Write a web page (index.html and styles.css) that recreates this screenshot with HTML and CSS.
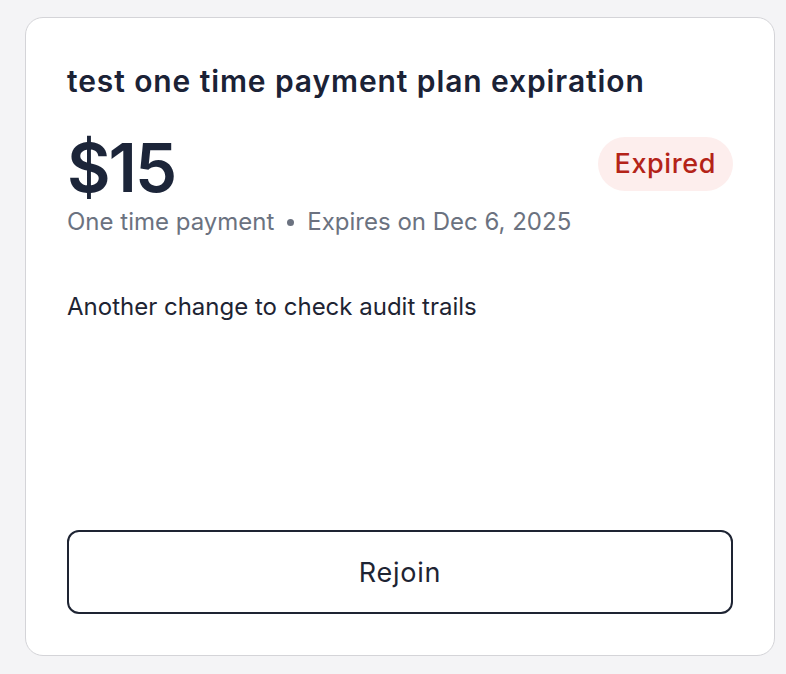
FILE: index.html
```html
<!DOCTYPE html>
<html>
<head>
<meta charset="utf-8">
<link rel="stylesheet" href="styles.css">
</head>
<body>
<div class="page">
  <div class="card">
    <h2 class="title">test one time payment plan expiration</h2>
    <div class="price-row">
      <div class="price">$15</div>
      <span class="badge">Expired</span>
    </div>
    <div class="meta">
      <span>One time payment</span>
      <span class="dot"></span>
      <span>Expires on Dec 6, 2025</span>
    </div>
    <p class="desc">Another change to check audit trails</p>
    <button class="btn">Rejoin</button>
  </div>
</div>
</body>
</html>
```

FILE: styles.css
```css
* { box-sizing: border-box; }
html, body { margin: 0; padding: 0; }
body {
  background: #f4f4f6;
  font-family: Inter, "Noto Sans", sans-serif;
  width: 786px;
  height: 674px;
  overflow: hidden;
}
.page {
  padding: 17px 11px 0 25px;
}
.card {
  width: 750px;
  height: 639px;
  background: #ffffff;
  border: 1.5px solid #d4d4d8;
  border-radius: 18px;
  padding: 45px 41px 41px 41px;
  display: flex;
  flex-direction: column;
}
.title {
  margin: 0;
  font-size: 30px;
  line-height: 36px;
  font-weight: 600;
  color: #1b2236;
  letter-spacing: 0.9px;
}
.price-row {
  display: flex;
  justify-content: space-between;
  align-items: flex-start;
  margin-top: 35px;
}
.price {
  font-size: 67px;
  line-height: 67px;
  font-weight: 600;
  color: #1c2539;
  letter-spacing: -2px;
}
.badge {
  margin-top: 3px;
  background: #fdeeed;
  color: #b42318;
  font-size: 27px;
  line-height: 54px;
  height: 54px;
  padding: 0 17px;
  border-radius: 27px;
  font-weight: 500;
  letter-spacing: 0.6px;
}
.meta {
  display: flex;
  align-items: center;
  gap: 13px;
  margin-top: 6px;
  font-size: 24px;
  line-height: 30px;
  color: #6b7280;
}
.dot {
  width: 7px;
  height: 7px;
  border-radius: 50%;
  background: #6b7280;
}
.desc {
  margin: 55px 0 0 0;
  font-size: 24px;
  line-height: 30px;
  color: #1e2433;
}
.btn {
  margin-top: auto;
  height: 84px;
  width: 100%;
  background: #ffffff;
  border: 2px solid #1e2433;
  border-radius: 12px;
  font-family: Inter, "Noto Sans", sans-serif;
  font-size: 27px;
  letter-spacing: 0.8px;
  color: #1e2433;
}
```
